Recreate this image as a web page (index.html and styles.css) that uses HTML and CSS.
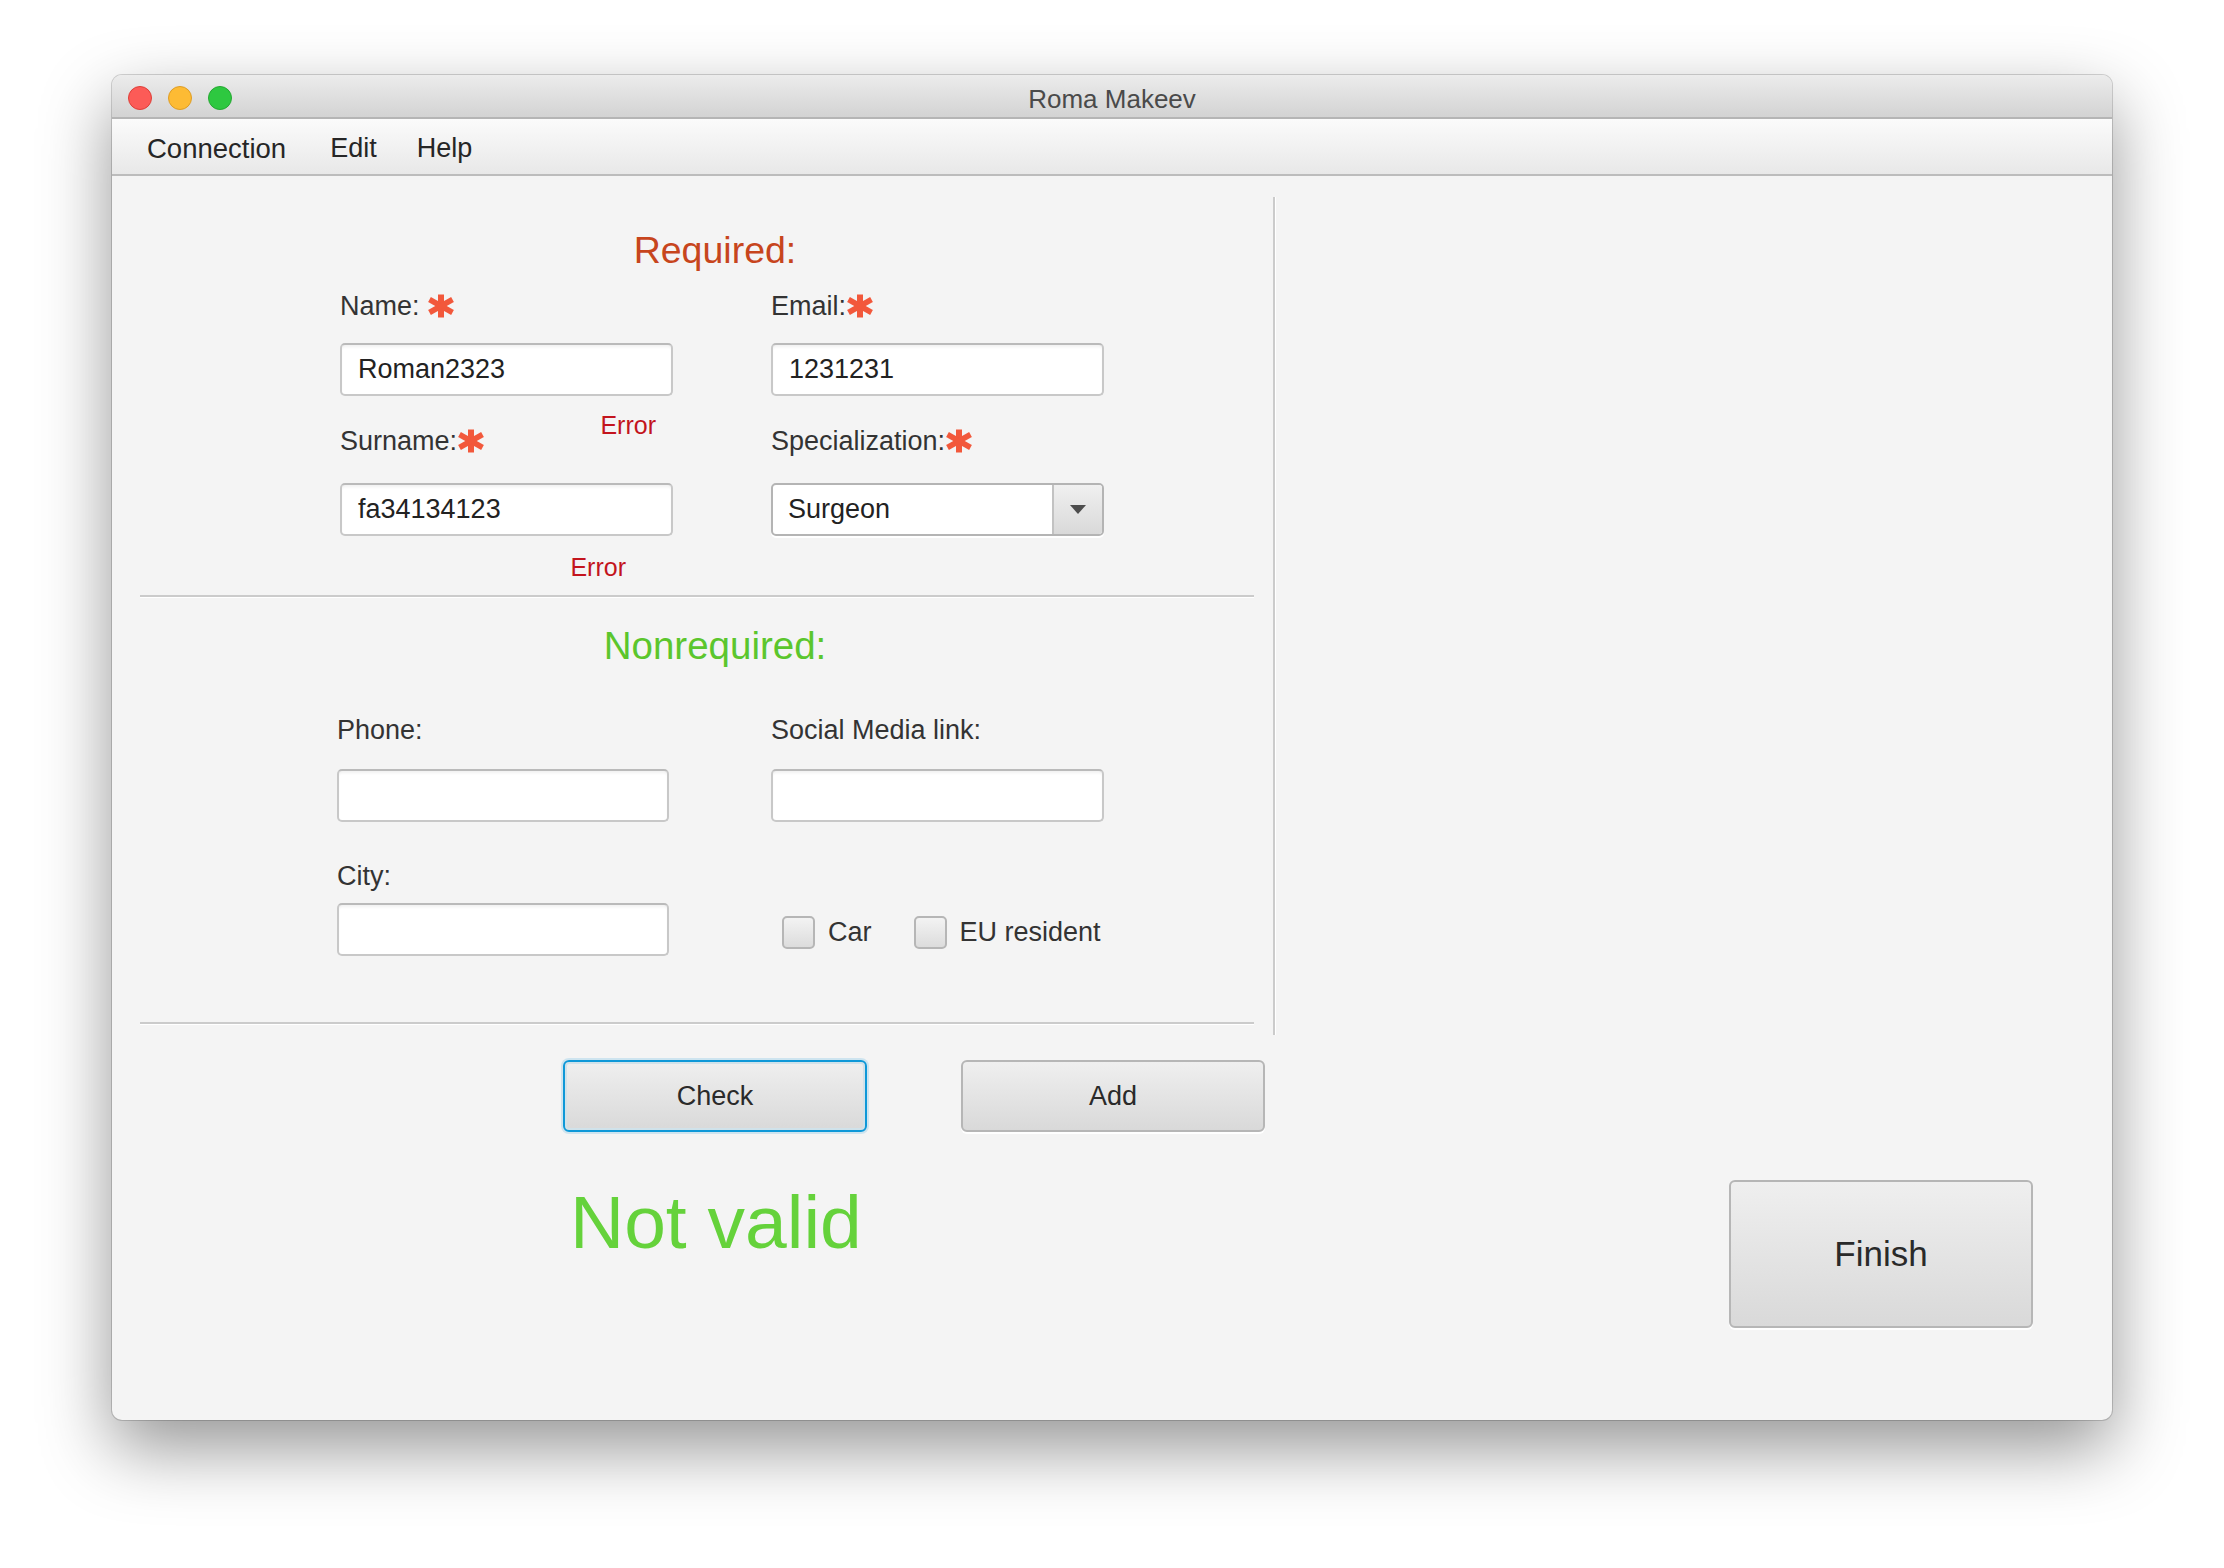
FILE: index.html
```html
<!DOCTYPE html>
<html>
<head>
<meta charset="utf-8">
<title>Roma Makeev</title>
<link rel="stylesheet" href="styles.css">
</head>
<body>
<div class="window">
  <div class="titlebar">
    <div class="lights">
      <span class="light red"></span>
      <span class="light yellow"></span>
      <span class="light green"></span>
    </div>
    <div class="title">Roma Makeev</div>
    <div></div>
  </div>
  <div class="menubar">
    <span class="menu-item m-conn">Connection</span>
    <span class="menu-item m-edit">Edit</span>
    <span class="menu-item">Help</span>
  </div>
  <div class="content">
    <div class="left">
      <div class="pane">
        <div class="sec-title req-title">Required:</div>

        <div class="grid2 req mt14">
          <div class="label">Name: <svg class="star" viewBox="0 0 28 24" width="28" height="24"><line x1="14" y1="0.5" x2="14" y2="23.5"/><line x1="2.5" y1="5.5" x2="25.5" y2="18.5"/><line x1="2.5" y1="18.5" x2="25.5" y2="5.5"/></svg></div>
          <div class="label">Email:<svg class="star" viewBox="0 0 28 24" width="28" height="24"><line x1="14" y1="0.5" x2="14" y2="23.5"/><line x1="2.5" y1="5.5" x2="25.5" y2="18.5"/><line x1="2.5" y1="18.5" x2="25.5" y2="5.5"/></svg></div>
        </div>

        <div class="grid2 req mt17">
          <div class="field">Roman2323</div>
          <div class="field">1231231</div>
        </div>

        <div class="grid2 req mt14 row-err">
          <div class="cell-err">
            <div class="label">Surname:<svg class="star" viewBox="0 0 28 24" width="28" height="24"><line x1="14" y1="0.5" x2="14" y2="23.5"/><line x1="2.5" y1="5.5" x2="25.5" y2="18.5"/><line x1="2.5" y1="18.5" x2="25.5" y2="5.5"/></svg></div>
            <div class="error err1">Error</div>
          </div>
          <div class="cell-bottom">
            <div class="label">Specialization:<svg class="star" viewBox="0 0 28 24" width="28" height="24"><line x1="14" y1="0.5" x2="14" y2="23.5"/><line x1="2.5" y1="5.5" x2="25.5" y2="18.5"/><line x1="2.5" y1="18.5" x2="25.5" y2="5.5"/></svg></div>
          </div>
        </div>

        <div class="grid2 req mt22">
          <div class="field">fa34134123</div>
          <div class="combo">
            <div class="combo-text">Surgeon</div>
            <div class="combo-btn"><svg viewBox="0 0 16 9" width="16" height="9"><polygon points="0,0 16,0 8,9" fill="#4d4d4d"/></svg></div>
          </div>
        </div>

        <div class="grid2 req mt16">
          <div class="error err2">Error</div>
          <div></div>
        </div>

        <div class="hr mt13"></div>

        <div class="sec-title nonreq-title mt26">Nonrequired:</div>

        <div class="grid2 nr mt42">
          <div class="label">Phone:</div>
          <div class="label">Social Media link:</div>
        </div>

        <div class="grid2 nr mt19">
          <div class="field"></div>
          <div class="field"></div>
        </div>

        <div class="grid2 nr mt34">
          <div class="label">City:</div>
          <div></div>
        </div>

        <div class="grid2 nr mt7">
          <div class="field"></div>
          <div class="checks">
            <div class="cb"></div>
            <div class="cb-label car">Car</div>
            <div class="cb"></div>
            <div class="cb-label">EU resident</div>
          </div>
        </div>

        <div class="hr mt66"></div>
      </div>

      <div class="actions">
        <div class="btn check">Check</div>
        <div class="btn">Add</div>
      </div>

      <div class="status">Not valid</div>
    </div>
    <div class="right">
      <div class="btn finish">Finish</div>
    </div>
  </div>
</div>
</body>
</html>
```

FILE: styles.css
```css
html, body {
  margin: 0;
  padding: 0;
}
body {
  background: #ffffff;
  font-family: "Liberation Sans", Arial, sans-serif;
  width: 2224px;
  height: 1568px;
  overflow: hidden;
}
.window {
  margin: 75px 0 0 112px;
  width: 2000px;
  height: 1345px;
  border-radius: 10px;
  overflow: hidden;
  background: #f4f4f4;
  display: flex;
  flex-direction: column;
  box-shadow: 0 0 0 1px rgba(0, 0, 0, 0.16), 0 28px 70px rgba(0, 0, 0, 0.42);
}
.titlebar {
  height: 42px;
  flex: none;
  border-bottom: 2px solid #b5b5b5;
  background: linear-gradient(#ececec, #d3d3d3);
  display: grid;
  grid-template-columns: 1fr auto 1fr;
  align-items: center;
}
.lights {
  display: flex;
  gap: 16px;
  padding-left: 16px;
  margin-top: 4px;
}
.light {
  width: 24px;
  height: 24px;
  border-radius: 50%;
  box-sizing: border-box;
  border: 1px solid;
}
.red { background: #fc5b57; border-color: #de3f38; }
.yellow { background: #fdbb34; border-color: #de9d25; }
.green { background: #2ec840; border-color: #25a832; }
.title {
  font-size: 26px;
  color: #4a4a4a;
  line-height: 36px;
  padding-top: 6px;
}
.menubar {
  height: 52px;
  padding-top: 3px;
  flex: none;
  border-bottom: 2px solid #bcbcbc;
  background: linear-gradient(#fbfbfb, #e8e8e8);
  display: flex;
  padding-left: 35px;
  font-size: 27px;
  line-height: 53px;
  color: #262626;
}
.m-conn {
  font-size: 27.5px;
  margin-right: 44px;
}
.m-edit {
  margin-right: 40px;
}
.content {
  flex: 1;
  display: flex;
}
.left {
  width: 1180px;
  flex: none;
  display: flex;
  flex-direction: column;
}
.pane {
  margin: 21px 0 0 28px;
  width: 1133px;
  border-right: 2px solid #cbcbcb;
  box-shadow: 1px 0 0 #ffffff;
  padding-top: 31px;
  padding-bottom: 10px;
}
.sec-title {
  line-height: 44px;
  text-align: center;
  padding-left: 36px;
  margin-right: 19px;
}
.req-title {
  font-size: 37.5px;
  color: #c7451d;
}
.nonreq-title {
  font-size: 38.5px;
  color: #5bc62d;
}
.hr {
  height: 2px;
  background: #cbcbcb;
  border-bottom: 1px solid #ffffff;
  margin-right: 19px;
}
.grid2 {
  display: grid;
}
.req {
  grid-template-columns: 333px 333px;
  column-gap: 98px;
  margin-left: 200px;
}
.nr {
  grid-template-columns: 332px 333px;
  column-gap: 102px;
  margin-left: 197px;
}
.mt7 { margin-top: 7px; }
.mt13 { margin-top: 13px; }
.mt14 { margin-top: 14px; }
.mt16 { margin-top: 16px; }
.mt17 { margin-top: 17px; }
.mt19 { margin-top: 19px; }
.mt22 { margin-top: 22px; }
.mt26 { margin-top: 26px; }
.mt34 { margin-top: 34px; }
.mt42 { margin-top: 42px; }
.mt66 { margin-top: 66px; }
.label {
  font-size: 27px;
  line-height: 40px;
  color: #333333;
  white-space: nowrap;
}
.star {
  vertical-align: -3px;
  stroke: #f2583b;
  stroke-width: 5.5;
}
.star line:first-child {
  stroke-width: 6;
}
.field {
  height: 53px;
  box-sizing: border-box;
  background: #ffffff;
  border: 2px solid #c8c8c8;
  border-top-color: #bababa;
  border-radius: 5px;
  box-shadow: inset 0 3px 3px -1px rgba(0, 0, 0, 0.06);
  font-size: 27px;
  line-height: 49px;
  padding-left: 16px;
  color: #222222;
}
.row-err {
  height: 51px;
}
.cell-err {
  display: flex;
  justify-content: space-between;
}
.cell-err .label {
  align-self: flex-end;
}
.cell-bottom {
  display: flex;
  align-items: flex-end;
}
.error {
  font-size: 25px;
  line-height: 30px;
  color: #c3141d;
}
.err1 {
  align-self: flex-start;
  margin-right: 17px;
}
.err2 {
  text-align: right;
  padding-right: 47px;
}
.combo {
  height: 53px;
  box-sizing: border-box;
  display: flex;
  background: #ffffff;
  border: 2px solid #b4b4b4;
  border-radius: 5px;
  box-shadow: 0 2px 0 #ffffff;
  overflow: hidden;
}
.combo-text {
  flex: 1;
  font-size: 27px;
  line-height: 49px;
  padding-left: 15px;
  color: #222222;
}
.combo-btn {
  width: 50px;
  box-sizing: border-box;
  border-left: 2px solid #c2c2c2;
  background: linear-gradient(#f0f0f0, #d9d9d9);
  display: flex;
  align-items: center;
  justify-content: center;
}
.checks {
  display: flex;
  align-items: center;
  padding-left: 11px;
  padding-top: 6px;
}
.cb {
  width: 33px;
  height: 33px;
  box-sizing: border-box;
  border: 2px solid #b6b6b6;
  border-radius: 5px;
  background: linear-gradient(#f3f3f3, #dcdcdc);
}
.cb-label {
  margin-left: 13px;
  font-size: 27px;
  color: #333333;
}
.cb-label.car {
  margin-right: 42px;
}
.actions {
  display: flex;
  gap: 94px;
  margin-top: 25px;
  padding-left: 451px;
}
.btn {
  width: 304px;
  height: 72px;
  box-sizing: border-box;
  border: 2px solid #b6b6b6;
  border-radius: 6px;
  background: linear-gradient(#efefef, #d9d9d9);
  font-size: 27px;
  color: #2a2a2a;
  display: flex;
  align-items: center;
  justify-content: center;
  box-shadow: 0 2px 0 #ffffff;
}
.check {
  border-color: #0e98d8;
  box-shadow: inset 0 0 0 2px #d0e2ea, 0 0 0 2px rgba(14, 152, 216, 0.16);
}
.status {
  margin-top: 48px;
  margin-left: 458px;
  font-size: 75px;
  line-height: 84px;
  color: #65d23b;
}
.right {
  flex: 1;
  display: flex;
  justify-content: flex-end;
  align-items: flex-end;
  padding: 0 79px 92px 0;
}
.finish {
  width: 304px;
  height: 148px;
  font-size: 35px;
}
```
